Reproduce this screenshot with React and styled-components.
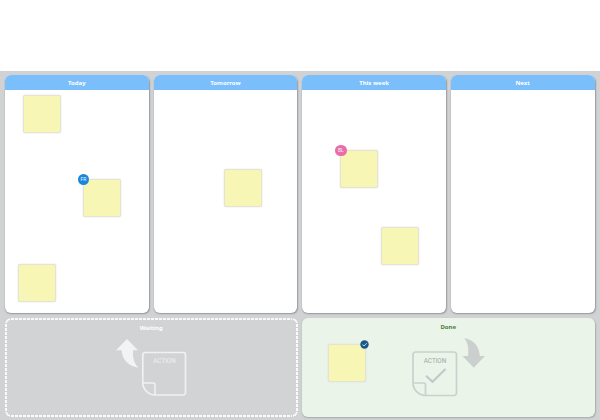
import React from 'react';
import styled, { createGlobalStyle } from 'styled-components';

const GlobalStyle = createGlobalStyle`
  * { box-sizing: border-box; }
  body { margin: 0; background: #fff; font-family: "Noto Sans", "Open Sans", sans-serif; }
`;

const Page = styled.div`
  display: flex;
  flex-direction: column;
  height: 420px;
  width: 600px;
  overflow: hidden;
`;

const TopSpace = styled.header`
  flex: 0 0 71px;
  background: #fff;
`;

const Board = styled.main`
  flex: 1;
  display: grid;
  grid-template-rows: 238px 99px;
  gap: 5px;
  padding: 4px 5.5px 3px 5px;
  background: #d0d2d3;
`;

const Columns = styled.div`
  display: grid;
  grid-template-columns: repeat(4, 1fr);
  gap: 5px;
`;

const Zones = styled.div`
  display: grid;
  grid-template-columns: repeat(2, 1fr);
  gap: 4.5px;
`;

const Column = styled.section`
  position: relative;
  background: #fff;
  border-radius: 6px;
  box-shadow: 0.5px 1px 1.5px #96999c;
`;

const ColumnTitle = styled.h2`
  margin: 0;
  height: 15px;
  line-height: 16px;
  border-radius: 6px 6px 0 0;
  background: #7abefb;
  color: #fff;
  text-align: center;
  font-size: 6px;
  font-weight: 700;
`;

const Zone = styled.section`
  position: relative;
  border-radius: 6px;
  padding-top: 5px;
`;

/* Fine dashes along the edges, with solid rounded corners. */
const WaitingZone = styled(Zone)`
  background: #d1d3d5;

  &::after {
    content: "";
    position: absolute;
    inset: 0;
    border: 2px solid #fafafa;
    border-radius: 6px;
    pointer-events: none;
    mask:
      repeating-linear-gradient(90deg, #000 0 3px, transparent 3px 4px) 6px 0 / calc(100% - 12px) 2px no-repeat border-box,
      repeating-linear-gradient(90deg, #000 0 3px, transparent 3px 4px) 6px 100% / calc(100% - 12px) 2px no-repeat border-box,
      repeating-linear-gradient(180deg, #000 0 3px, transparent 3px 4px) 0 6px / 2px calc(100% - 12px) no-repeat border-box,
      repeating-linear-gradient(180deg, #000 0 3px, transparent 3px 4px) 100% 6px / 2px calc(100% - 12px) no-repeat border-box,
      linear-gradient(#000 0 0) 0 0 / 5px 5px no-repeat,
      linear-gradient(#000 0 0) 100% 0 / 5px 5px no-repeat,
      linear-gradient(#000 0 0) 0 100% / 5px 5px no-repeat,
      linear-gradient(#000 0 0) 100% 100% / 5px 5px no-repeat;
  }
`;

const DoneZone = styled(Zone)`
  background: #eaf4e9;
  padding-top: 4px;
  box-shadow: 0.5px 1px 1.5px #a6abab;
`;

const ZoneTitle = styled.h2`
  margin: 0;
  height: 10px;
  line-height: 10px;
  text-align: center;
  font-size: 6px;
  font-weight: 700;
  color: ${({ $color }) => $color};
`;

const Note = styled.div`
  position: absolute;
  left: ${({ $x }) => $x}px;
  top: ${({ $y }) => $y}px;
  width: 38px;
  height: 38px;
  border: 1px solid #e4e4d2;
  border-radius: 2px;
  background: #f8f6b5;
  box-shadow: 0 0 1.5px #d4d5d4;
`;

const Badge = styled.span`
  position: absolute;
  left: -6px;
  top: -6.5px;
  width: 11.5px;
  height: 11.5px;
  border-radius: 50%;
  background: ${({ $color }) => $color};
  color: #e8f2fb;
  font: 5px/11.5px Roboto, sans-serif;
  text-align: center;
`;

const DoneBadge = styled.svg`
  position: absolute;
  right: -4px;
  top: -5px;
  width: 9px;
  height: 9px;
`;

const ActionArt = styled.svg`
  position: absolute;
  left: ${({ $x }) => $x}px;
  top: ${({ $y }) => $y}px;
  width: 80px;
  height: 65px;
  font-family: Roboto, sans-serif;
  font-size: 6.3px;
`;

const columns = [
  { title: 'Today', notes: [
    { x: 18.3, y: 20 },
    { x: 77.6, y: 104, badge: 'FR', color: '#1b87dc' },
    { x: 13, y: 189 },
  ] },
  { title: 'Tomorrow', notes: [{ x: 70.3, y: 94 }] },
  { title: 'This week', notes: [
    { x: 37.8, y: 75, badge: 'BL', color: '#ea6ca8' },
    { x: 78.4, y: 152 },
  ] },
  { title: 'Next', notes: [] },
];

function WaitingArt() {
  return (
    <ActionArt $x={111} $y={20} viewBox="0 0 80 65" fill="none">
      <path d="M11 1 22 12.300H17.200C16.400 19.500 18 25 22.300 29.700 12 27.800 6 21.500 5.700 12.300H0Z" fill="#f2f3f3" />
      <path d="M29.300 14.500H67a2.500 2.500 0 0 1 2.500 2.500V54.500a2.500 2.500 0 0 1-2.500 2.500H39C32.500 57 26.800 51 26.800 45V17a2.500 2.500 0 0 1 2.500-2.500" stroke="#f0f1f1" strokeWidth="1.7" />
      <path d="M26.800 45H37a2 2 0 0 1 2 2V57" stroke="#f0f1f1" strokeWidth="1.6" />
      <text x="48.500" y="25" fill="#f0f1f1" textAnchor="middle">ACTION</text>
    </ActionArt>
  );
}

function DoneArt() {
  return (
    <ActionArt $x={110} $y={19} viewBox="0 0 80 65" fill="none">
      <path d="M52.300 1C61.800 3 67.300 9 67.800 19H73L61.700 30.800 50.500 19H56C57 11.500 56 6 52.300 1Z" fill="#cbcfce" />
      <path d="M3.500 15H42a2.500 2.500 0 0 1 2.500 2.500V56a2.500 2.500 0 0 1-2.500 2.500H13.500C6.500 58.500 1 52.500 1 46V17.500a2.500 2.500 0 0 1 2.500-2.500" stroke="#cbcfce" strokeWidth="1.7" />
      <path d="M1 46H11.500a2 2 0 0 1 2 2V58.500" stroke="#cbcfce" strokeWidth="1.7" />
      <path d="M14 38.800 20.500 44.800 33.500 32" stroke="#c2c7cb" strokeWidth="2" />
      <text x="23" y="25.500" fill="#a2a7a5" textAnchor="middle">ACTION</text>
    </ActionArt>
  );
}

export default function App() {
  return (
    <>
      <GlobalStyle />
      <Page>
        <TopSpace />
        <Board>
          <Columns>
            {columns.map(({ title, notes }) => (
              <Column key={title}>
                <ColumnTitle>{title}</ColumnTitle>
                {notes.map((n) => (
                  <Note key={`${n.x}-${n.y}`} $x={n.x} $y={n.y}>
                    {n.badge && <Badge $color={n.color}>{n.badge}</Badge>}
                  </Note>
                ))}
              </Column>
            ))}
          </Columns>
          <Zones>
            <WaitingZone>
              <ZoneTitle $color="#fff">Waiting</ZoneTitle>
              <WaitingArt />
            </WaitingZone>
            <DoneZone>
              <ZoneTitle $color="#4a7c3c">Done</ZoneTitle>
              <Note $x={25.5} $y={25.8}>
                <DoneBadge viewBox="0 0 9 9">
                  <circle cx="4.500" cy="4.500" r="4.200" fill="#195a8a" />
                  <path d="M2.500 4.600 4 6 6.700 3.200" fill="none" stroke="#d5e6ef" strokeWidth="0.9" />
                </DoneBadge>
              </Note>
              <DoneArt />
            </DoneZone>
          </Zones>
        </Board>
      </Page>
    </>
  );
}
